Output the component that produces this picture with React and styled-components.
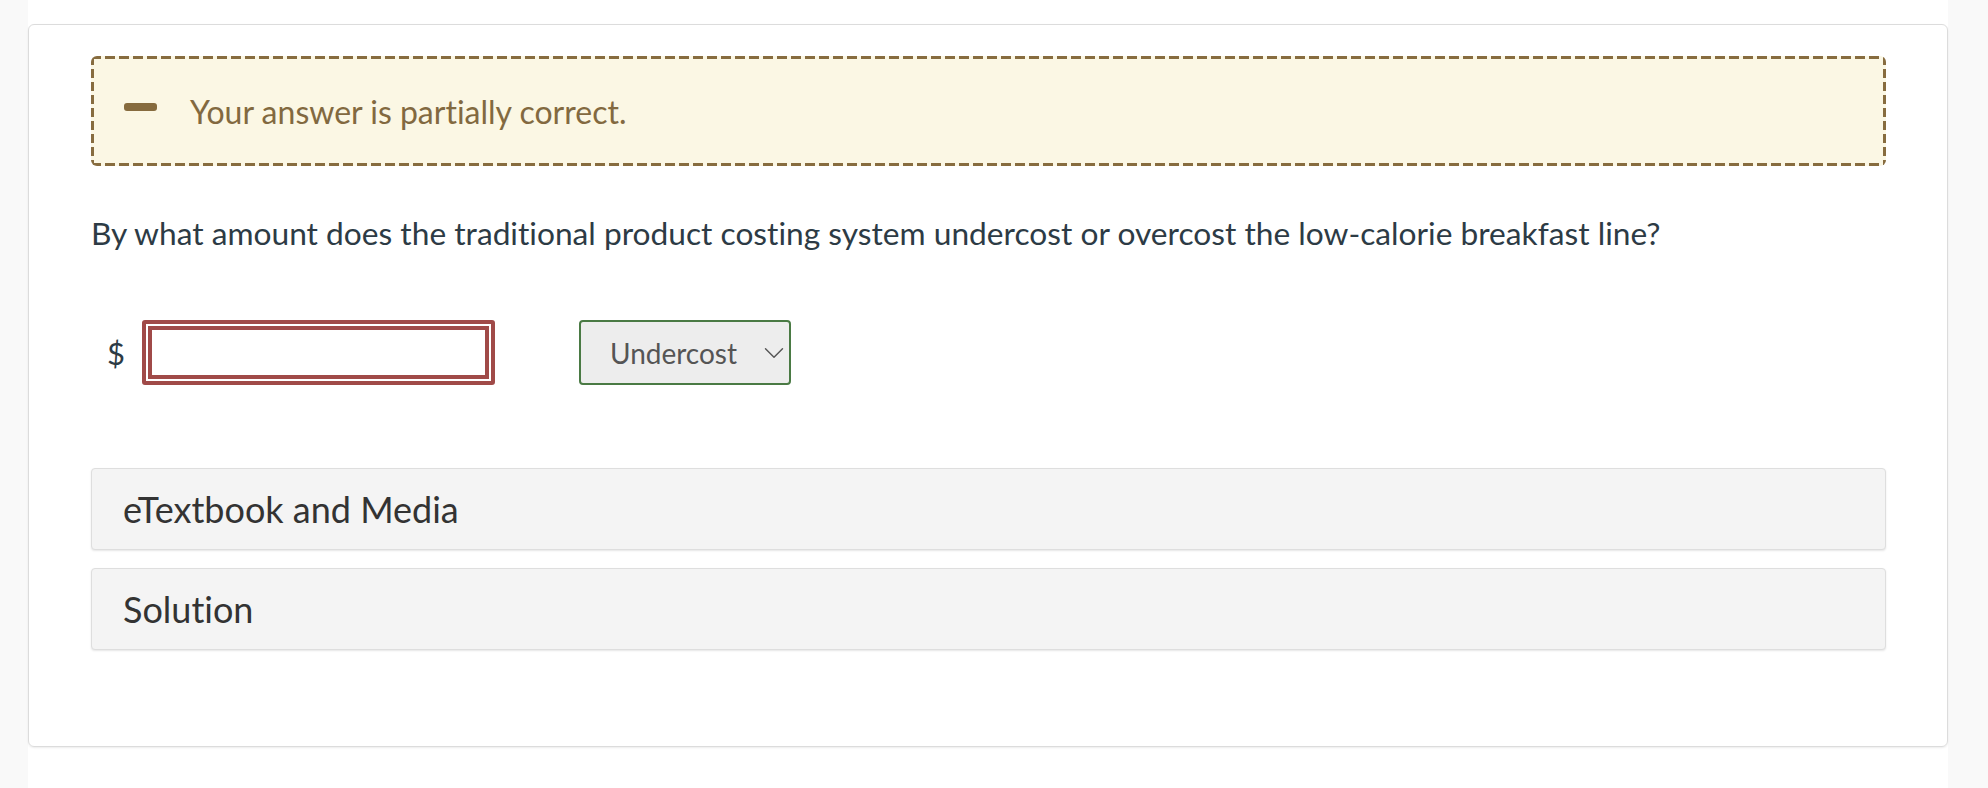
import React from "react";
import styled, { createGlobalStyle } from "styled-components";
import { ChevronDown } from "lucide-react";

const GlobalStyle = createGlobalStyle`
  html, body {
    margin: 0;
    padding: 0;
    background-color: #f9f9f9;
    font-family: Lato, "Open Sans", sans-serif;
    font-variant-ligatures: none;
  }
`;

const dash = "#876c3f";

const Page = styled.div`
  margin-left: 28px;
  width: 1920px;
  min-height: 788px;
  background-color: #fff;
  padding-top: 24px;
  box-sizing: border-box;
`;

const Card = styled.div`
  border: 1px solid #dcdcdc;
  border-radius: 6px;
  box-shadow: 0 1px 2px rgba(0, 0, 0, 0.08);
  padding: 31px 61px 96px 62px;
`;

const Alert = styled.div`
  display: flex;
  align-items: center;
  height: 110px;
  box-sizing: border-box;
  padding-left: 33px;
  border-radius: 6px;
  background:
    linear-gradient(90deg, ${dash} 10px, transparent 0) top left / 14px 3px repeat-x,
    linear-gradient(90deg, ${dash} 10px, transparent 0) bottom left / 14px 3px repeat-x,
    linear-gradient(180deg, ${dash} 9px, transparent 0) top left / 3px 13px repeat-y,
    linear-gradient(180deg, ${dash} 9px, transparent 0) top right / 3px 13px repeat-y,
    #fbf7e4;
`;

const MinusIcon = styled.span`
  width: 33px;
  height: 8px;
  border-radius: 3px;
  background-color: #866b3e;
  margin-right: 33px;
  margin-top: -8px;
`;

const AlertText = styled.span`
  font-size: 32px;
  color: #826940;
`;

const Question = styled.p`
  margin: 44px 0 0;
  font-size: 31.7px;
  line-height: 46px;
  color: #2d3b45;
`;

const AnswerRow = styled.div`
  display: flex;
  align-items: center;
  margin-top: 64px;
  padding-left: 16px;
`;

const Currency = styled.span`
  font-size: 31px;
  color: #2d3b45;
  margin-right: 17px;
`;

const FieldRing = styled.div`
  border: 4px solid #a04a48;
  border-radius: 3px;
  padding: 2px;
  background: #fff;
`;

const AmountInput = styled.input`
  display: block;
  width: 341px;
  height: 53px;
  box-sizing: border-box;
  border: 4px solid #a04a48;
  outline: none;
  font-family: Lato, sans-serif;
  font-size: 28px;
  padding: 0 8px;
`;

const SelectWrap = styled.div`
  position: relative;
  margin-left: 84px;
`;

const Select = styled.select`
  appearance: none;
  width: 212px;
  height: 65px;
  border: 2px solid #4a7a44;
  border-radius: 4px;
  background-color: #ededed;
  font-family: Lato, sans-serif;
  font-size: 28px;
  color: #555;
  padding: 0 0 0 29px;
  outline: none;
`;

const Chevron = styled(ChevronDown)`
  position: absolute;
  right: 0;
  top: 50%;
  transform: translateY(-50%);
  pointer-events: none;
  color: #555;
`;

const Section = styled.div`
  display: flex;
  align-items: center;
  height: 82px;
  box-sizing: border-box;
  padding-left: 31px;
  margin-top: ${(p) => (p.first ? "83px" : "18px")};
  background-color: #f4f4f4;
  border: 1px solid #dedede;
  border-radius: 4px;
  box-shadow: 0 1px 2px rgba(0, 0, 0, 0.1);
  font-size: 36px;
  color: #333;
`;

export default function App() {
  return (
    <>
      <GlobalStyle />
      <Page>
        <Card>
          <Alert>
            <MinusIcon />
            <AlertText>Your answer is partially correct.</AlertText>
          </Alert>
          <Question>
            By what amount does the traditional product costing system
            undercost or overcost the low-calorie breakfast line?
          </Question>
          <AnswerRow>
            <Currency>$</Currency>
            <FieldRing>
              <AmountInput type="text" />
            </FieldRing>
            <SelectWrap>
              <Select defaultValue="under">
                <option value="under">Undercost</option>
                <option value="over">Overcost</option>
              </Select>
              <Chevron size={34} strokeWidth={1} />
            </SelectWrap>
          </AnswerRow>
          <Section first>eTextbook and Media</Section>
          <Section>Solution</Section>
        </Card>
      </Page>
    </>
  );
}
